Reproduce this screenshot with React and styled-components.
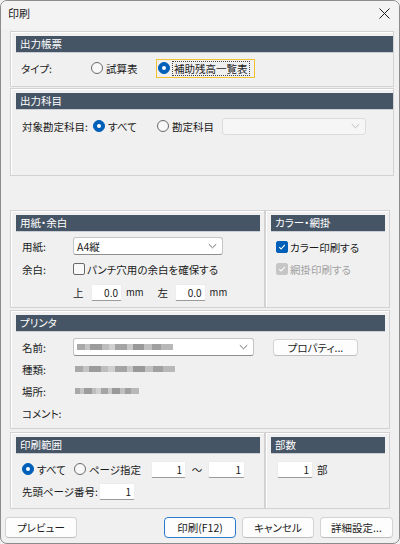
import React from "react";
import styled, { createGlobalStyle } from "styled-components";

const Global = createGlobalStyle`
  html, body { margin: 0; padding: 0; background: #f0f0f0; }
  body {
    font-family: "Noto Sans CJK JP", "Noto Sans", sans-serif;
    font-size: 10.5px;
    color: #1b1b1b;
    font-feature-settings: "palt";
  }
  * { box-sizing: border-box; }
`;

const Window = styled.div`
  width: 400px;
  height: 544px;
  border: 1px solid #8c8c8c;
  border-radius: 7px;
  background: #f0f0f0;
  overflow: hidden;
  display: flex;
  flex-direction: column;
`;

const TitleBar = styled.div`
  height: 28px;
  display: flex;
  align-items: center;
  justify-content: space-between;
  padding: 0 8px 4px 7px;
  background: #f3f3f3;
  font-size: 11px;
`;

const CloseBtn = styled.span`
  display: inline-flex;
  width: 14px;
  height: 14px;
  align-items: center;
  justify-content: center;
`;

const Body = styled.div`
  padding: 0 0 0 9px;
  display: flex;
  flex-direction: column;
`;

const GroupBox = styled.div`
  width: ${(p) => p.$w}px;
  height: ${(p) => p.$h}px;
  margin-top: ${(p) => p.$mt || 0}px;
  border: 1px solid #d2d2d2;
  box-shadow: inset 1px 1px 0 #ffffff;
  padding: 4px ${(p) => (p.$pr != null ? p.$pr : 4)}px 0 5px;
  display: flex;
  flex-direction: column;
`;

const Header = styled.div`
  height: 17px;
  background: #465566;
  color: #ffffff;
  padding-left: 4px;
  display: flex;
  align-items: center;
  line-height: 1;
  border-bottom: 1px solid #c9ced4;
`;

const Row = styled.div`
  display: flex;
  align-items: center;
  height: 18px;
  margin-top: ${(p) => p.$mt || 0}px;
  padding-left: ${(p) => (p.$pl != null ? p.$pl : 6)}px;
`;

const Label = styled.span`
  width: ${(p) => p.$w}px;
  margin-left: ${(p) => p.$ml || 0}px;
  flex: none;
  white-space: nowrap;
`;

const Text = styled.span`
  white-space: nowrap;
  margin-left: ${(p) => p.$ml || 0}px;
  color: ${(p) => (p.$disabled ? "#a2a2a2" : "inherit")};
`;

const Unit = styled.span`
  white-space: nowrap;
  margin-left: 4px;
  font-size: 9.5px;
`;

const Tilde = styled.span`
  width: ${(p) => p.$w}px;
  flex: none;
  text-align: center;
`;

const RowPair = styled.div`
  display: flex;
  margin-top: ${(p) => p.$mt || 0}px;
`;

const RadioWrap = styled.span`
  display: inline-flex;
  align-items: center;
  gap: 3px;
  flex: none;
  width: ${(p) => (p.$w ? `${p.$w}px` : "auto")};
  white-space: nowrap;
`;

const RadioCircle = styled.span`
  width: 12px;
  height: 12px;
  border-radius: 50%;
  flex: none;
  display: inline-flex;
  align-items: center;
  justify-content: center;
  border: 1px solid ${(p) => (p.$checked ? "#005fb8" : "#6a6a6a")};
  background: ${(p) => (p.$checked ? "#005fb8" : "#f8f8f8")};
  &::after {
    content: "";
    display: ${(p) => (p.$checked ? "block" : "none")};
    width: 4px;
    height: 4px;
    border-radius: 50%;
    background: #ffffff;
  }
`;

const FocusBox = styled.span`
  display: inline-flex;
  align-items: center;
  height: 19px;
  width: 99px;
  padding-left: 1px;
  border: 1px solid #f2c130;
`;

const FocusText = styled.span`
  outline: 1px dotted #444;
  outline-offset: 0px;
  padding: 0 1px;
  line-height: 13px;
`;

const Radio = ({ checked, children, w, focus }) => (
  <RadioWrap $w={w}>
    <RadioCircle $checked={checked} />
    {focus ? <FocusText>{children}</FocusText> : <span>{children}</span>}
  </RadioWrap>
);

const CheckBoxBox = styled.span`
  width: 12px;
  height: 12px;
  border-radius: 2px;
  flex: none;
  display: inline-flex;
  align-items: center;
  justify-content: center;
  border: 1px solid
    ${(p) => (p.$disabled ? "#c6c6c6" : p.$checked ? "#005fb8" : "#6a6a6a")};
  background: ${(p) =>
    p.$disabled ? "#c6c6c6" : p.$checked ? "#005fb8" : "#f8f8f8"};
`;

const CheckWrap = styled.span`
  display: inline-flex;
  align-items: center;
  gap: 2px;
  white-space: nowrap;
`;

const Check = ({ checked, disabled, children }) => (
  <CheckWrap>
    <CheckBoxBox $checked={checked} $disabled={disabled}>
      {checked && (
        <svg width="8" height="8" viewBox="0 0 8 8">
          <path d="M1.2 4.2 L3.1 6 L6.8 1.8" fill="none" stroke="#fff" strokeWidth="1.1" />
        </svg>
      )}
    </CheckBoxBox>
    <Text $disabled={disabled}>{children}</Text>
  </CheckWrap>
);

const Select = styled.div`
  width: ${(p) => p.$w}px;
  height: ${(p) => p.$h || 18}px;
  flex: none;
  background: ${(p) => (p.$disabled ? "#f6f6f6" : "#ffffff")};
  border: 1px solid ${(p) => (p.$disabled ? "#dcdcdc" : "#c4c4c4")};
  border-bottom-color: ${(p) => (p.$disabled ? "#dcdcdc" : "#8e8e8e")};
  border-radius: 3px;
  display: flex;
  align-items: center;
  padding-left: 3px;
  padding-right: 5px;
  justify-content: space-between;
`;

const Chevron = ({ color = "#5d5d5d" }) => (
  <svg width="9" height="6" viewBox="0 0 9 6">
    <path d="M0.8 1.2 L4.5 4.8 L8.2 1.2" fill="none" stroke={color} strokeWidth="0.9" />
  </svg>
);

const Input = styled.div`
  width: ${(p) => p.$w}px;
  height: 17px;
  flex: none;
  margin-left: ${(p) => p.$ml || 0}px;
  background: #ffffff;
  border: 1px solid #ececec;
  border-bottom: 1px solid #9a9a9a;
  border-radius: 2px;
  display: flex;
  align-items: center;
  justify-content: flex-end;
  padding-right: 3px;
  font-size: 10px;
`;

const Button = styled.div`
  width: ${(p) => p.$w}px;
  height: ${(p) => p.$h || 21}px;
  flex: none;
  margin-left: ${(p) => p.$ml || 0}px;
  background: #fdfdfd;
  border: 1px solid ${(p) => (p.$primary ? "#2a7bd0" : "#d3d3d3")};
  border-bottom-color: ${(p) => (p.$primary ? "#2a7bd0" : "#bdbdbd")};
  border-radius: 4px;
  display: flex;
  align-items: center;
  justify-content: center;
  white-space: nowrap;
`;

const Blur = styled.div`
  width: ${(p) => p.$w}px;
  height: 6px;
  filter: blur(0.7px);
  background: linear-gradient(
    90deg,
    #a9a9a9 0%, #a9a9a9 8%,
    #c4c4c4 8%, #c4c4c4 14%,
    #9c9c9c 14%, #9c9c9c 26%,
    #bdbdbd 26%, #bdbdbd 33%,
    #d0d0d0 33%, #d0d0d0 40%,
    #a4a4a4 40%, #a4a4a4 52%,
    #c8c8c8 52%, #c8c8c8 58%,
    #999999 58%, #999999 70%,
    #c0c0c0 70%, #c0c0c0 78%,
    #a0a0a0 78%, #a0a0a0 88%,
    #b8b8b8 88%, #b8b8b8 100%
  );
`;

const Footer = styled.div`
  display: flex;
  margin-top: 8px;
  padding: 0 6px 0 4px;
`;

const Spacer = styled.div`
  flex: 1;
`;

export default function App() {
  return (
    <>
      <Global />
      <Window>
        <TitleBar>
          <span>印刷</span>
          <CloseBtn>
            <svg width="11" height="11" viewBox="0 0 11 11">
              <path d="M0.5 0.5 L10.5 10.5 M10.5 0.5 L0.5 10.5" stroke="#1f1f1f" strokeWidth="1" />
            </svg>
          </CloseBtn>
        </TitleBar>
        <Body>
          <GroupBox $w={384} $h={56} $mt={2} $pr={0}>
            <Header>出力帳票</Header>
            <Row $mt={6} $pl={5}>
              <Label $w={70}>タイプ:</Label>
              <Radio w={65}>試算表</Radio>
              <FocusBox>
                <Radio checked focus>
                  補助残高一覧表
                </Radio>
              </FocusBox>
            </Row>
          </GroupBox>

          <GroupBox $w={384} $h={88} $mt={1} $pr={0}>
            <Header>出力科目</Header>
            <Row $mt={7}>
              <Label $w={71}>対象勘定科目:</Label>
              <Radio checked w={64}>
                すべて
              </Radio>
              <Radio w={65}>勘定科目</Radio>
              <Select $w={144} $h={17} $disabled>
                <span />
                <Chevron color="#b8b8b8" />
              </Select>
            </Row>
          </GroupBox>

          <RowPair $mt={34}>
            <GroupBox $w={255} $h={98}>
              <Header>用紙・余白</Header>
              <Row $mt={5}>
                <Label $w={51}>用紙:</Label>
                <Select $w={150}>
                  <span>A4縦</span>
                  <Chevron />
                </Select>
              </Row>
              <Row $mt={5}>
                <Label $w={51}>余白:</Label>
                <Check>パンチ穴用の余白を確保する</Check>
              </Row>
              <Row $mt={5} $pl={57}>
                <Label $w={18}>上</Label>
                <Input $w={31}>0.0</Input>
                <Unit>mm</Unit>
                <Label $w={17} $ml={14}>
                  左
                </Label>
                <Input $w={31}>0.0</Input>
                <Unit>mm</Unit>
              </Row>
            </GroupBox>
            <GroupBox $w={125} $h={98}>
              <Header>カラー・網掛</Header>
              <Row $mt={6} $pl={5}>
                <Check checked>カラー印刷する</Check>
              </Row>
              <Row $mt={4} $pl={5}>
                <Check checked disabled>
                  網掛印刷する
                </Check>
              </Row>
            </GroupBox>
          </RowPair>

          <GroupBox $w={380} $h={119} $mt={2}>
            <Header>プリンタ</Header>
            <Row $mt={6}>
              <Label $w={51}>名前:</Label>
              <Select $w={181}>
                <Blur $w={96} />
                <Chevron />
              </Select>
              <Button $w={85} $h={17} $ml={19}>
                プロパティ...
              </Button>
            </Row>
            <Row $mt={4}>
              <Label $w={53}>種類:</Label>
              <Blur $w={100} />
            </Row>
            <Row $mt={4}>
              <Label $w={53}>場所:</Label>
              <Blur $w={64} />
            </Row>
            <Row $mt={4}>
              <Label $w={53}>コメント:</Label>
            </Row>
          </GroupBox>

          <RowPair $mt={3}>
            <GroupBox $w={255} $h={77}>
              <Header>印刷範囲</Header>
              <Row $mt={6}>
                <Radio checked w={52}>
                  すべて
                </Radio>
                <Radio w={77}>ページ指定</Radio>
                <Input $w={35}>1</Input>
                <Tilde $w={22}>〜</Tilde>
                <Input $w={37}>1</Input>
              </Row>
              <Row $mt={4}>
                <Label $w={77}>先頭ページ番号:</Label>
                <Input $w={36}>1</Input>
              </Row>
            </GroupBox>
            <GroupBox $w={125} $h={77}>
              <Header>部数</Header>
              <Row $mt={6}>
                <Input $w={36}>1</Input>
                <Text $ml={4}>部</Text>
              </Row>
            </GroupBox>
          </RowPair>
        </Body>
        <Footer>
          <Button $w={72}>プレビュー</Button>
          <Spacer />
          <Button $w={72} $primary>
            印刷(F12)
          </Button>
          <Button $w={72} $ml={6}>
            キャンセル
          </Button>
          <Button $w={73} $ml={6}>
            詳細設定...
          </Button>
        </Footer>
      </Window>
    </>
  );
}
